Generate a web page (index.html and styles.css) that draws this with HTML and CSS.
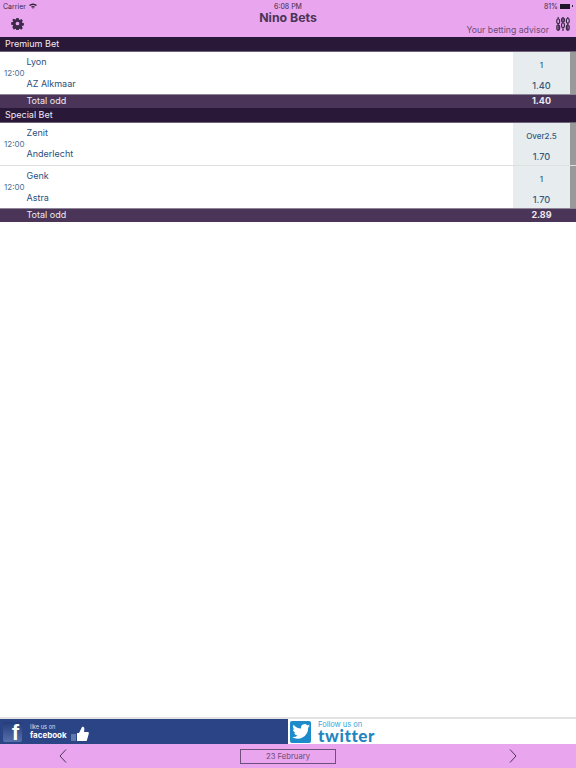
FILE: index.html
```html
<!DOCTYPE html>
<html lang="en">
<head>
<meta charset="utf-8">
<title>Nino Bets</title>
<link rel="stylesheet" href="styles.css">
</head>
<body>
<div class="app">
  <header class="header">
    <div class="status">
      <div class="status-left">
        <span>Carrier</span>
        <svg class="wifi" width="8" height="6" viewBox="0 0 8 6"><path d="M0 2Q4-1 8 2L7 3Q4 1 1 3ZM2 3.700Q4 2.300 6 3.700L5 4.700Q4 4 3 4.700ZM3.500 5.200L4 4.800L4.500 5.200L4 6Z" fill="#2c2034"/></svg>
      </div>
      <span class="status-time">6:08 PM</span>
      <div class="status-right">
        <span>81%</span>
        <span class="battery"><span class="battery-fill"></span></span>
      </div>
    </div>
    <div class="titlebar">
      <div class="title-left">
        <svg class="gear" width="13" height="13" viewBox="-2 -2 28 28"><path fill="#3c2a4a" fill-rule="evenodd" d="M9.500 0h5l.7 3.500 1.800.8 3-2 3.500 3.500-2 3 .8 1.800 3.500.7v5l-3.500.7-.8 1.800 2 3-3.500 3.500-3-2-1.800.8-.7 3.500h-5l-.7-3.500-1.800-.8-3 2L.7 19.800l2-3-.8-1.800L-1.600 14.500v-5l3.500-.7.8-1.800-2-3L4.200 1.500l3 2 1.800-.8zM12 8a4 4 0 1 0 0 8 4 4 0 0 0 0-8z"/></svg>
      </div>
      <h1 class="title">Nino Bets</h1>
      <div class="title-right">
        <span class="tagline">Your betting advisor</span>
        <svg class="sliders" width="14" height="14" viewBox="0 0 14 14" fill="none" stroke="#3c2a4a" stroke-width="1.200"><path d="M2.200 0v2M2.200 6.500v7.500M7 0v6M7 10.500v3.500M11.800 0v1.500M11.800 6v8"/><rect x=".8" y="2" width="2.800" height="4.500" rx="1.300"/><rect x="5.600" y="6" width="2.800" height="4.500" rx="1.300"/><rect x="10.400" y="1.500" width="2.800" height="4.500" rx="1.300"/><rect x=".8" y="8" width="2.800" height="5" rx="1.300"/><rect x="10.400" y="8" width="2.800" height="5" rx="1.300"/><rect x="5.600" y="1" width="2.800" height="4" rx="1.300"/></svg>
      </div>
    </div>
  </header>

  <main class="content">
    <div class="section-bar">Premium Bet</div>
    <div class="match">
      <span class="time">12:00</span>
      <div class="teams"><span>Lyon</span><span>AZ Alkmaar</span></div>
      <div class="odds"><span class="pick">1</span><span class="odd">1.40</span></div>
      <span class="strip"></span>
    </div>
    <div class="total"><span>Total odd</span><span class="total-value">1.40</span></div>

    <div class="section-bar">Special Bet</div>
    <div class="match match-split">
      <span class="time">12:00</span>
      <div class="teams"><span>Zenit</span><span>Anderlecht</span></div>
      <div class="odds"><span class="pick pick-small">Over2.5</span><span class="odd">1.70</span></div>
      <span class="strip"></span>
    </div>
    <div class="match">
      <span class="time">12:00</span>
      <div class="teams"><span>Genk</span><span>Astra</span></div>
      <div class="odds"><span class="pick">1</span><span class="odd">1.70</span></div>
      <span class="strip"></span>
    </div>
    <div class="total"><span>Total odd</span><span class="total-value">2.89</span></div>
  </main>

  <div class="banners">
    <div class="banner banner-fb">
      <span class="fb-square">f</span>
      <div class="fb-text"><span class="fb-small">like us on</span><span class="fb-big">facebook</span></div>
      <svg class="thumb" width="18" height="15" viewBox="0 0 18 15"><rect x="0" y="8" width="5" height="7" fill="#5f79ad"/><path d="M6 7h2l3-6c2-1 3 1 2 5h4c1 0 1 1 .7 2l-1.700 6c0 .6-.5 1-1 1H6z" fill="#fff"/></svg>
    </div>
    <div class="banner banner-tw">
      <span class="tw-square">
        <svg width="18" height="15" viewBox="0 0 24 20"><path fill="#fff" d="M24 2.400c-.9.400-1.800.7-2.800.8 1-.6 1.800-1.600 2.200-2.700-1 .6-2 1-3.100 1.200A4.900 4.900 0 0 0 12 6.100C8 5.900 4.400 4 2 1c-1.300 2.200-.7 5 1.500 6.500-.8 0-1.600-.2-2.200-.6 0 2.300 1.600 4.400 3.900 4.900-.7.200-1.500.2-2.200.1.600 2 2.400 3.400 4.600 3.400A9.900 9.900 0 0 1 0 17.300 14 14 0 0 0 21.500 5c1-.7 1.800-1.600 2.500-2.600z"/></svg>
      </span>
      <div class="tw-text"><span class="tw-small">Follow us on</span><span class="tw-big">twitter</span></div>
    </div>
  </div>

  <footer class="nav">
    <svg width="8" height="14" viewBox="0 0 8 14" fill="none" stroke="#4a3558" stroke-width="1"><path d="M7 .5L1 7l6 6.500"/></svg>
    <span class="date">23 February</span>
    <svg width="8" height="14" viewBox="0 0 8 14" fill="none" stroke="#4a3558" stroke-width="1"><path d="M1 .5L7 7l-6 6.500"/></svg>
  </footer>
</div>
</body>
</html>
```
FILE: styles.css
```css
* { box-sizing: border-box; }
html, body { margin: 0; padding: 0; background: #fff; }
body { font-family: Inter, "Liberation Sans", sans-serif; color: #2a4f7c; }
.app { display: flex; flex-direction: column; width: 576px; height: 768px; overflow: hidden; }

.header { height: 37px; background: #e9a6ee; color: #3c2a4a; flex: none; }
.status { height: 12px; padding: 0 3px; display: grid; grid-template-columns: 1fr auto 1fr; align-items: center; font-size: 7px; color: #3a2a46; }
.status-left { display: flex; align-items: center; gap: 3px; }
.status-right { display: flex; align-items: center; justify-content: flex-end; gap: 2px; }
.battery { width: 13px; height: 5px; display: block; padding-right: 1px; background: linear-gradient(#2c2034, #2c2034) right center / 1px 2px no-repeat; }
.battery-fill { display: block; height: 100%; width: 80%; background: #1f1528; }
.titlebar { height: 25px; display: grid; grid-template-columns: 1fr auto 1fr; }
.title-left { padding: 5px 0 0 11px; }
.gear { display: block; }
.title { margin: 0; font-size: 12.300px; line-height: 12px; font-weight: 700; color: #4a3558; }
.title-right { display: flex; justify-content: flex-end; align-items: flex-start; gap: 7px; padding: 5px 6px 0 0; }
.tagline { font-size: 8.700px; line-height: 11px; margin-top: 8px; color: #6d4d78; }
.sliders { flex: none; display: block; }

.content { flex: 1; }
.section-bar { height: 15px; padding: 0 5px; background: #2a1839; border-bottom: 1px solid #6d6277; color: #f1e9f4; font-size: 9px; line-height: 14px; }
.match { display: flex; height: 42px; background: #fff; }
.match-split { height: 43px; border-bottom: 1px solid #dfdfdd; }
.time { width: 26.500px; padding-left: 4px; font-size: 8px; line-height: 42px; color: #4b7197; }
.teams { flex: 1; display: flex; flex-direction: column; justify-content: space-between; padding: 4px 0; font-size: 9px; line-height: 12px; }
.match-split .teams { padding-bottom: 5px; }
.odds { width: 57px; background: #e7edee; display: flex; flex-direction: column; justify-content: space-between; align-items: center; padding: 8px 0 2px; color: #34597f; }
.pick { font-size: 8px; line-height: 11px; color: #34597f; font-weight: 500; }
.pick-small { font-size: 8px; }
.odd { font-size: 9.200px; line-height: 12px; font-weight: 500; }
.strip { width: 6px; background: #999; }
.total { height: 14px; display: flex; padding-left: 26.500px; background: #4a3558; border-top: 1px solid #8f8598; color: #efe8f2; font-size: 9px; line-height: 12px; }
.total span:first-child { flex: 1; }
.total-value { width: 63px; padding-right: 6px; text-align: center; font-weight: 700; }

.banners { flex: none; height: 27px; display: grid; grid-template-columns: 1fr 1fr; border-top: 2px solid #e2e2e2; }
.banner { display: flex; align-items: center; }
.banner-fb { background: #2b4485; padding-left: 3px; }
.fb-square { width: 19px; height: 20px; border-radius: 2px; background: linear-gradient(#243c79, #5771ae); color: #fff; font-family: "Liberation Sans", sans-serif; font-weight: 700; font-size: 22px; line-height: 21px; text-align: right; padding-right: 3px; }
.fb-text { display: flex; flex-direction: column; margin-left: 8px; color: #fff; }
.fb-small { font-size: 5.700px; line-height: 6px; color: #d8deea; }
.fb-big { font-size: 8px; line-height: 10px; font-weight: 700; }
.thumb { margin: 3px 0 0 4px; }
.banner-tw { background: #fff; }
.tw-square { width: 21px; height: 22px; margin-left: 2px; border-radius: 2px; background: #1d8ac9; display: flex; align-items: center; justify-content: center; }
.tw-text { display: flex; flex-direction: column; margin-left: 7px; gap: 2px; }
.tw-small { font-size: 7.500px; line-height: 7px; color: #35a7dd; }
.tw-big { font-family: Lato, sans-serif; font-size: 17px; line-height: 12px; font-weight: 900; letter-spacing: .6px; color: #1f86bf; }

.nav { flex: none; height: 24px; background: #e9a6ee; display: flex; align-items: center; justify-content: space-between; padding: 0 59px; }
.date { width: 96px; height: 15px; border: 1px solid #6f4f7c; color: #6a4d76; font-size: 7.700px; line-height: 13px; text-align: center; }
```
